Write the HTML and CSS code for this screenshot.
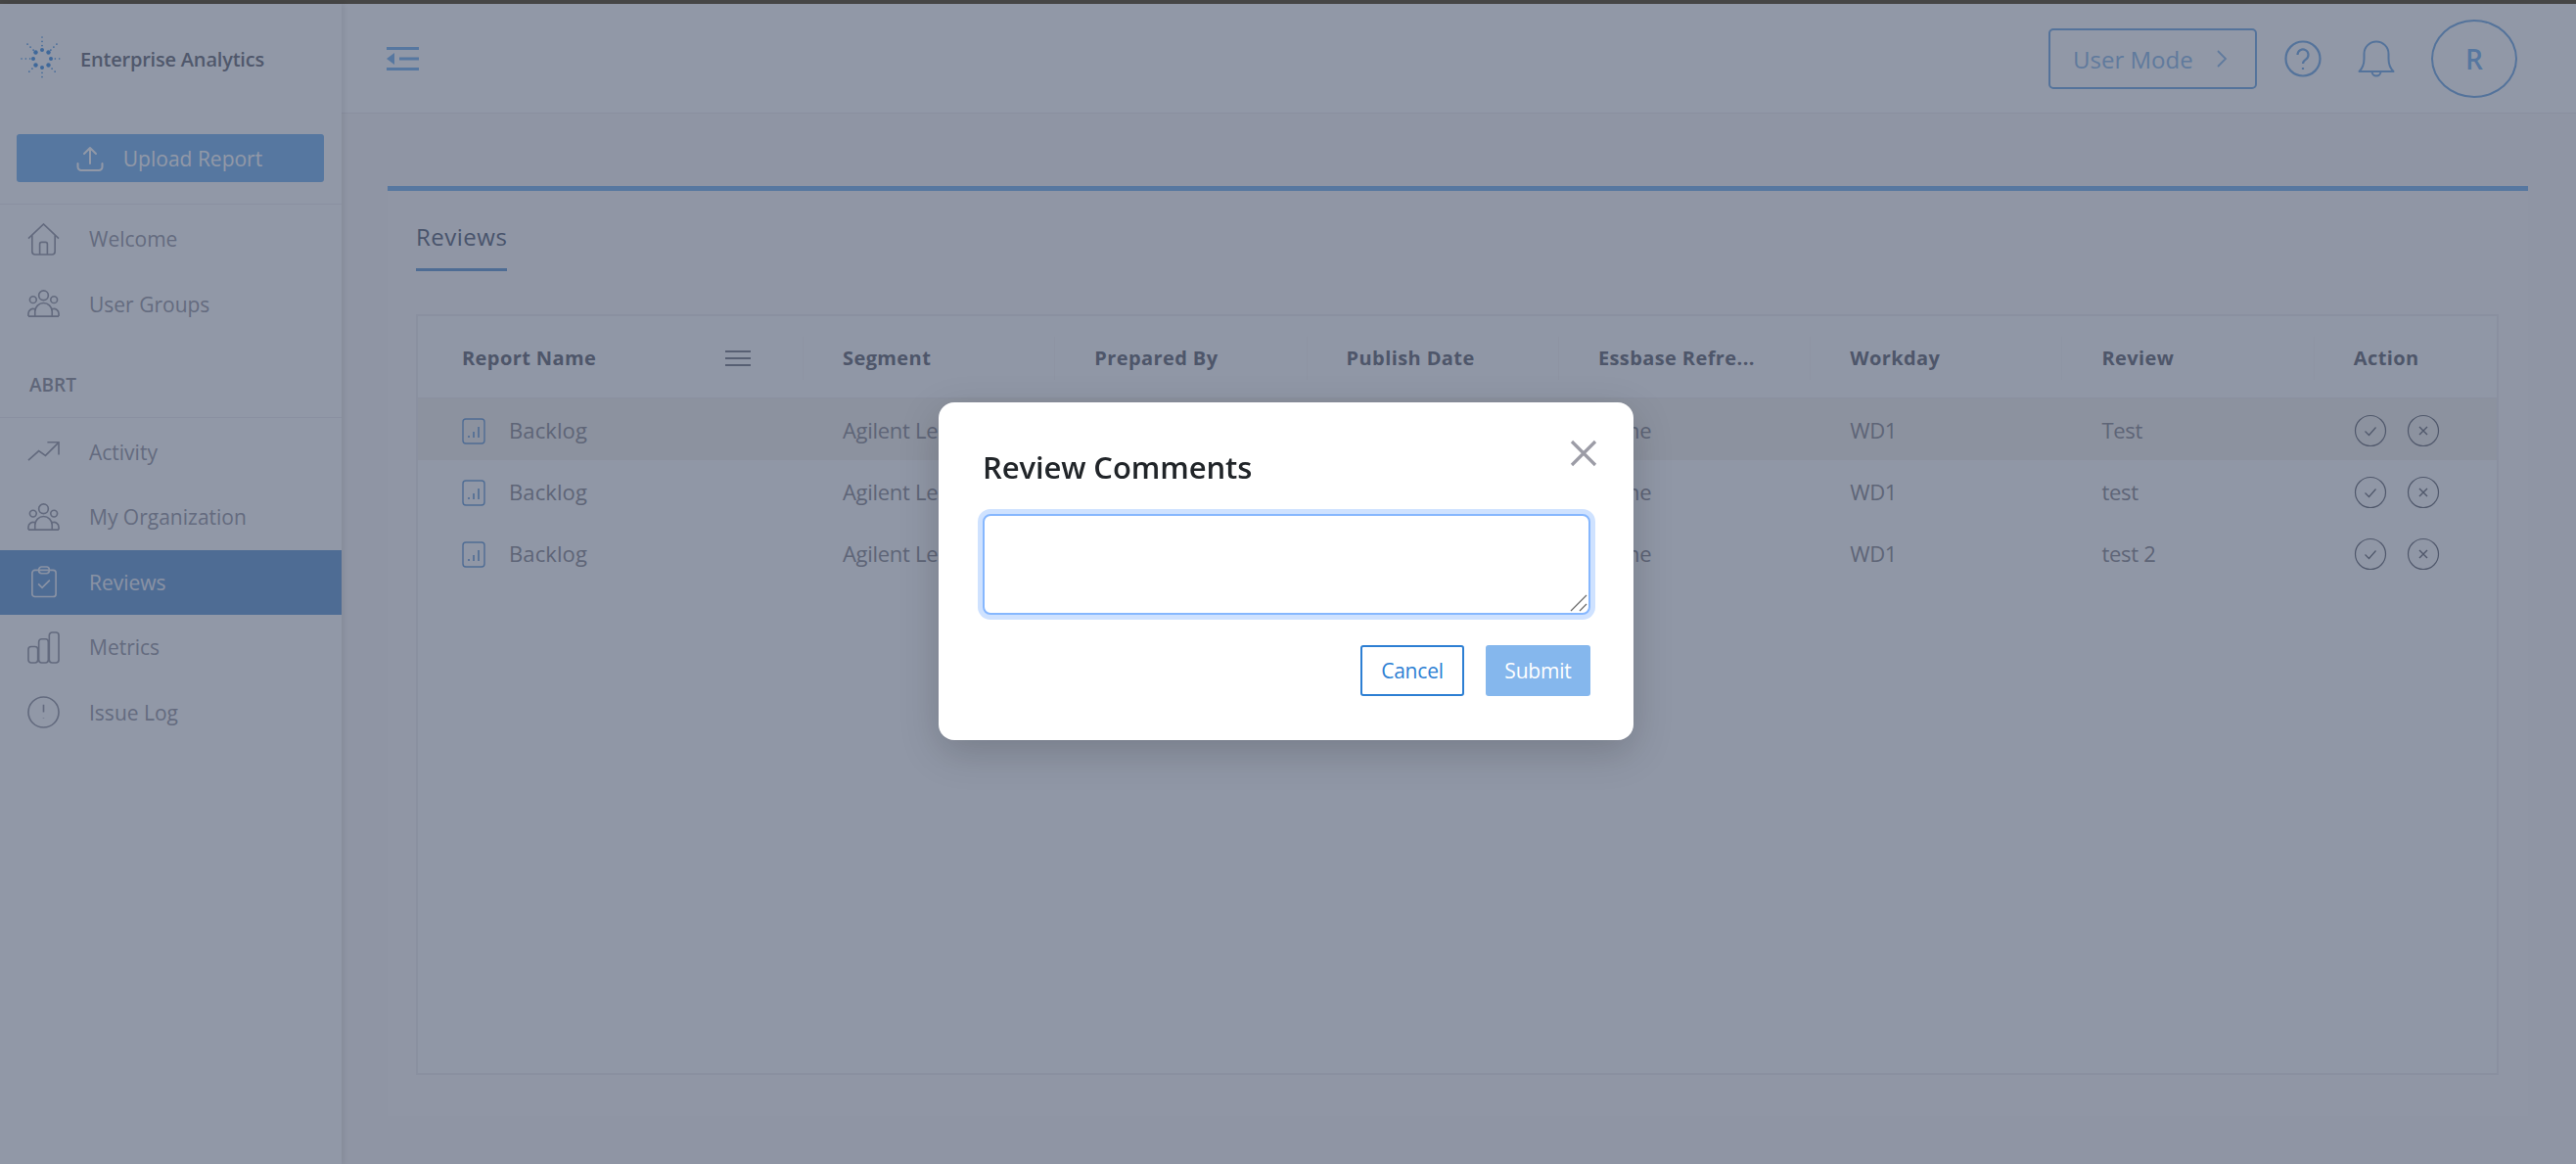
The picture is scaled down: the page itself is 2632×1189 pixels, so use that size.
FILE: index.html
```html
<!DOCTYPE html>
<html lang="en">
<head>
    <meta charset="UTF-8">
    <meta name="viewport" content="width=device-width, initial-scale=1.0">
    <title>Enterprise Analytics - Reviews</title>
    <link rel="stylesheet" href="styles.css">
</head>
<body>
    <svg class="defs" width="0" height="0">
        <symbol id="i-report" viewBox="0 0 24 27">
            <rect x="1" y="1" width="22" height="25" rx="3" fill="none" stroke="currentColor" stroke-width="1.4"/>
            <path d="M7 20v-2M12 20v-6M17 20V9" fill="none" stroke="currentColor" stroke-width="1.6"/>
        </symbol>
        <symbol id="i-check" viewBox="0 0 34 34">
            <circle cx="17" cy="17" r="15.5" fill="none" stroke="currentColor" stroke-width="1.2"/>
            <path d="M11.5 17.5l4 4 7-8" fill="none" stroke="currentColor" stroke-width="1.2"/>
        </symbol>
        <symbol id="i-cross" viewBox="0 0 34 34">
            <circle cx="17" cy="17" r="15.5" fill="none" stroke="currentColor" stroke-width="1.2"/>
            <path d="M13 13l8 8M21 13l-8 8" fill="none" stroke="currentColor" stroke-width="1.4"/>
        </symbol>
    </svg>

    <div class="topbar"></div>

    <div class="app">
        <!-- Sidebar -->
        <aside class="sidebar">
            <div class="brand">
                <svg class="logo" width="44" height="46" viewBox="0 0 44 46">
                    <g fill="none" stroke="#5a9fe4" stroke-linecap="round">
                        <g stroke-width="1.6" stroke-dasharray="0.1 4.2">
                            <path d="M22 1v12M22 33v12M1 23h12M31 23h12"/>
                            <path d="M7 8l8 8M29 30l8 8M37 8l-8 8M15 30l-8 8"/>
                        </g>
                    </g>
                    <g fill="#5a9fe4">
                        <circle cx="22" cy="14" r="2"/><circle cx="22" cy="32" r="2"/>
                        <circle cx="13" cy="23" r="2"/><circle cx="31" cy="23" r="2"/>
                        <circle cx="15.5" cy="16.5" r="2.2"/><circle cx="28.5" cy="16.5" r="2.2"/>
                        <circle cx="15.5" cy="29.5" r="2.2"/><circle cx="28.5" cy="29.5" r="2.2"/>
                    </g>
                </svg>
                <span class="brand-name">Enterprise Analytics</span>
            </div>

            <div class="upload-wrap">
                <button class="upload-btn" type="button">
                    <svg width="28" height="27" viewBox="0 0 28 27" fill="none" stroke="currentColor" stroke-width="2" stroke-linecap="round" stroke-linejoin="round">
                        <path d="M14 18V2M8 8l6-6 6 6M1.500 18v3.500a3.500 3.500 0 0 0 3.500 3.500h18a3.500 3.500 0 0 0 3.500-3.500V18"/>
                    </svg>
                    Upload Report
                </button>
            </div>

            <nav class="nav">
                <a class="nav-item">
                    <svg class="nav-icon" viewBox="0 0 34 34"><path d="M1 16L17 1l16 15M5 13v17a3 3 0 0 0 3 3h18a3 3 0 0 0 3-3V13M13 33V22a2 2 0 0 1 2-2h4a2 2 0 0 1 2 2v11"/></svg>
                    Welcome
                </a>
                <a class="nav-item">
                    <svg class="nav-icon" viewBox="0 0 34 30"><circle cx="17" cy="6" r="5"/><circle cx="6" cy="10.500" r="3.500"/><circle cx="28" cy="10.500" r="3.500"/><path d="M8 28v-5a9 9 0 0 1 18 0v5M1 28v-3a5 5 0 0 1 7-4.500M33 28v-3a5 5 0 0 0-7-4.500M1 28h32"/></svg>
                    User Groups
                </a>
            </nav>

            <div class="nav-title">ABRT</div>

            <nav class="nav nav-sub">
                <a class="nav-item">
                    <svg class="nav-icon" viewBox="0 0 34 24"><path d="M1 21l11-10 7 5L33 2M21 2h12v13"/></svg>
                    Activity
                </a>
                <a class="nav-item">
                    <svg class="nav-icon" viewBox="0 0 34 30"><circle cx="17" cy="6" r="5"/><circle cx="6" cy="11" r="3.500"/><circle cx="28" cy="11" r="3.500"/><path d="M8 28v-5a9 9 0 0 1 18 0v5M1 28v-3a5 5 0 0 1 7-4.500M33 28v-3a5 5 0 0 0-7-4.500M1 28h32"/></svg>
                    My Organization
                </a>
                <a class="nav-item active">
                    <svg class="nav-icon" viewBox="0 0 34 34"><rect x="5" y="4.500" width="25" height="28" rx="3"/><rect x="12" y="1" width="11" height="7" rx="3"/><path d="M11.500 19l4 4 8-8"/></svg>
                    Reviews
                </a>
                <a class="nav-item">
                    <svg class="nav-icon" viewBox="0 0 34 34"><rect x="1" y="16" width="10" height="17" rx="3"/><rect x="12" y="8" width="10" height="25" rx="3"/><rect x="23" y="1" width="10" height="32" rx="3"/></svg>
                    Metrics
                </a>
                <a class="nav-item">
                    <svg class="nav-icon" viewBox="0 0 34 34"><circle cx="17" cy="17" r="16"/><path d="M17 9v8M17 23v.500"/></svg>
                    Issue Log
                </a>
            </nav>
        </aside>

        <!-- Main -->
        <div class="main">
            <header class="header">
                <svg class="menu-toggle" width="34" height="28" viewBox="0 0 34 28">
                    <path d="M1 2h33v3H1zM14 12.500h20v3H14zM1 23h33v3H1z"/>
                    <path d="M9 8v12l-8-6z"/>
                </svg>
                <div class="header-right">
                    <button class="mode-btn" type="button">User Mode
                        <svg width="12" height="20" viewBox="0 0 12 20" fill="none" stroke="currentColor" stroke-width="1.800"><path d="M2 2l8 8-8 8"/></svg>
                    </button>
                    <svg class="help" width="38" height="38" viewBox="0 0 38 38" fill="none" stroke="currentColor" stroke-width="2.200">
                        <circle cx="19" cy="19" r="17.500"/>
                        <path d="M13.500 15a5.500 5.500 0 1 1 8.500 4.600c-2 1.300-3 2.400-3 4.400M19 28v2"/>
                    </svg>
                    <svg class="bell" width="38" height="42" viewBox="0 0 38 42" fill="none" stroke="currentColor" stroke-width="2" stroke-linejoin="round">
                        <path d="M1.500 34c3-3 5-6 5-13v-5a12.500 12.500 0 0 1 25 0v5c0 7 2 10 5 13zM14.500 34a4.500 4.500 0 0 0 9 0"/>
                    </svg>
                    <div class="avatar">R</div>
                </div>
            </header>

            <section class="content">
                <div class="card">
                    <div class="tabs"><span class="tab">Reviews</span></div>

                    <div class="grid">
                        <div class="row head">
                            <div class="cell first">Report Name
                                <svg class="col-menu" width="26" height="18" viewBox="0 0 26 18" fill="none" stroke="currentColor" stroke-width="2"><path d="M0 2h26M0 9h26M0 16h26"/></svg>
                            </div>
                            <div class="cell">Segment</div>
                            <div class="cell">Prepared By</div>
                            <div class="cell">Publish Date</div>
                            <div class="cell">Essbase Refre...</div>
                            <div class="cell">Workday</div>
                            <div class="cell">Review</div>
                            <div class="cell">Action</div>
                        </div>

                        <div class="row hover">
                            <div class="cell first"><svg class="doc" width="24" height="27"><use href="#i-report"/></svg>Backlog</div>
                            <div class="cell">Agilent Learning</div>
                            <div class="cell"></div>
                            <div class="cell"></div>
                            <div class="cell">None</div>
                            <div class="cell">WD1</div>
                            <div class="cell">Test</div>
                            <div class="cell actions"><svg width="34" height="34"><use href="#i-check"/></svg><svg width="34" height="34"><use href="#i-cross"/></svg></div>
                        </div>
                        <div class="row">
                            <div class="cell first"><svg class="doc" width="24" height="27"><use href="#i-report"/></svg>Backlog</div>
                            <div class="cell">Agilent Learning</div>
                            <div class="cell"></div>
                            <div class="cell"></div>
                            <div class="cell">None</div>
                            <div class="cell">WD1</div>
                            <div class="cell">test</div>
                            <div class="cell actions"><svg width="34" height="34"><use href="#i-check"/></svg><svg width="34" height="34"><use href="#i-cross"/></svg></div>
                        </div>
                        <div class="row">
                            <div class="cell first"><svg class="doc" width="24" height="27"><use href="#i-report"/></svg>Backlog</div>
                            <div class="cell">Agilent Learning</div>
                            <div class="cell"></div>
                            <div class="cell"></div>
                            <div class="cell">None</div>
                            <div class="cell">WD1</div>
                            <div class="cell">test 2</div>
                            <div class="cell actions"><svg width="34" height="34"><use href="#i-check"/></svg><svg width="34" height="34"><use href="#i-cross"/></svg></div>
                        </div>
                    </div>
                </div>
            </section>
        </div>
    </div>

    <!-- Review comments dialog -->
    <div class="backdrop">
        <div class="modal">
            <div class="modal-head">
                <h2>Review Comments</h2>
                <svg class="modal-close" width="28" height="28" viewBox="0 0 28 28" fill="none" stroke="currentColor" stroke-width="3.200"><path d="M2 2l24 24M26 2L2 26"/></svg>
            </div>
            <div class="comments-wrap">
                <textarea class="comments"></textarea>
                <svg class="grip" width="18" height="18" viewBox="0 0 18 18" fill="none" stroke="#6b6b6b" stroke-width="1.200"><path d="M1 17L17 1M10 17l7-7"/></svg>
            </div>
            <div class="modal-foot">
                <button class="btn-cancel" type="button">Cancel</button>
                <button class="btn-submit" type="button">Submit</button>
            </div>
        </div>
    </div>
</body>
</html>
```

FILE: styles.css
```css
* {
    box-sizing: border-box;
}

body {
    margin: 0;
    height: 1189px;
    overflow: hidden;
    font-family: "Open Sans", "Noto Sans", sans-serif;
    background-color: #fff;
    color: #333;
}

.defs {
    position: absolute;
}

.topbar {
    height: 4px;
    background-color: #464646;
}

.app {
    display: flex;
    height: 1185px;
}

/* Sidebar */
.sidebar {
    width: 349px;
    flex-shrink: 0;
    background-color: #fff;
    box-shadow: 3px 0 6px rgba(0, 0, 0, 0.08);
    position: relative;
}

.brand {
    display: flex;
    align-items: center;
    height: 112px;
    padding: 0 0 0 21px;
}

.brand-name {
    margin-left: 17px;
    font-size: 20px;
    font-weight: 600;
    letter-spacing: -0.2px;
    color: #7c7f88;
}

.upload-wrap {
    padding: 21px 18px 22px 17px;
    border-bottom: 1px solid #f0eff2;
}

.upload-btn {
    display: flex;
    align-items: center;
    justify-content: center;
    gap: 20px;
    width: 100%;
    height: 49px;
    padding: 0 2px 0 0;
    font-family: inherit;
    font-size: 21px;
    color: #fff;
    background-color: #88bcf0;
    border: none;
    border-radius: 3px;
}

.upload-btn svg {
    margin-top: 2px;
}

.nav {
    padding-top: 2px;
}

.nav-item {
    display: flex;
    align-items: center;
    height: 66.400px;
    padding-left: 28px;
    font-size: 21px;
    color: #a5a5ae;
}

.nav-icon {
    width: 33px;
    height: 33px;
    margin-right: 30px;
    fill: none;
    stroke: #a2a3ad;
    stroke-width: 1.700;
}

.nav-item.active {
    background-color: #79a6d8;
    color: #eef2f8;
}

.nav-item.active .nav-icon {
    stroke: #eef2f8;
}

.nav-title {
    display: flex;
    align-items: flex-end;
    height: 83px;
    padding: 0 0 20px 30px;
    font-size: 19px;
    font-weight: 600;
    color: #9a9aa3;
    border-bottom: 1px solid #f0eff2;
}

.nav-sub {
    padding-top: 2px;
}

/* Main */
.main {
    flex: 1;
    min-width: 0;
    background-color: #fbf9f8;
}

.header {
    display: flex;
    align-items: center;
    justify-content: space-between;
    height: 112px;
    padding: 1px 60px 0 45px;
    background-color: #fff;
    border-bottom: 1px solid #efedef;
}

.menu-toggle {
    fill: #88bcf0;
}

.header-right {
    display: flex;
    align-items: center;
}

.mode-btn {
    display: flex;
    align-items: center;
    gap: 23px;
    width: 213px;
    height: 62px;
    padding: 0 0 0 23px;
    font-family: inherit;
    font-size: 24px;
    color: #9cc3ea;
    background: none;
    border: 2px solid #84b4e6;
    border-radius: 5px;
}

.help {
    margin-left: 28px;
    color: #84b4e6;
}

.bell {
    margin-left: 37px;
    color: #84b4e6;
}

.avatar {
    display: flex;
    align-items: center;
    justify-content: center;
    width: 88px;
    height: 80px;
    margin-left: 37px;
    font-size: 28px;
    font-weight: 600;
    color: #88bcf0;
    border: 2px solid #84b4e6;
    border-radius: 50%;
}

.content {
    padding: 74px 49px 0 47px;
}

.card {
    height: 950px;
    padding: 0 30px 0 29px;
    border-top: 5px solid #88bcf0;
    background-color: #fcfafa;
}

.tabs {
    height: 126px;
    padding-top: 29px;
}

.tab {
    display: inline-block;
    padding-bottom: 14px;
    font-size: 24px;
    line-height: 36px;
    letter-spacing: 0.5px;
    color: #6e7688;
    border-bottom: 3px solid #79a6d8;
}

.grid {
    height: 777px;
    border: 2px solid #f1eff1;
    background-color: #fdfcfc;
}

.row {
    display: grid;
    grid-template-columns: 394px repeat(6, 257.300px) 1fr;
    align-items: center;
    height: 63px;
    font-size: 22px;
    letter-spacing: -0.3px;
    color: #99989f;
}

.row.head {
    height: 84px;
    padding-top: 2px;
    font-size: 20px;
    font-weight: 700;
    letter-spacing: 0.4px;
    color: #787a84;
    border-bottom: 1px solid #f1eff1;
}

.row.hover {
    background-color: #f5f2ee;
}

.cell {
    padding-left: 40px;
    white-space: nowrap;
}

.head .cell {
    height: 44px;
    line-height: 44px;
    border-right: 1px solid #f8f6f7;
}

.head .cell:last-child {
    border-right: none;
}

.cell.first {
    display: flex;
    align-items: center;
    padding-left: 45px;
}

.row:not(.head) .cell.first {
    letter-spacing: 0.1px;
}

.col-menu {
    margin-left: auto;
    margin-right: 53px;
    color: #8b8d96;
}

.doc {
    margin: 3px 24px 0 0;
    color: #79a6d8;
}

.actions {
    display: flex;
    gap: 20px;
    padding-top: 3px;
    color: #7c7f88;
}

/* Dialog */
.backdrop {
    position: fixed;
    top: 4px;
    left: 0;
    right: 0;
    bottom: 0;
    display: flex;
    justify-content: center;
    align-items: flex-start;
    padding: 407px 4px 0 0;
    background-color: rgba(35, 50, 80, 0.5);
}

.modal {
    width: 710px;
    height: 345px;
    padding: 38px 44px 0 45px;
    background-color: #fff;
    border-radius: 16px;
    box-shadow: 0 12px 40px rgba(0, 0, 0, 0.18);
}

.modal-head {
    display: flex;
    justify-content: space-between;
    align-items: flex-start;
    height: 76px;
}

.modal-head h2 {
    margin: 0;
    padding-top: 6px;
    font-size: 31px;
    line-height: 44px;
    font-weight: 600;
    letter-spacing: -0.1px;
    color: #212529;
}

.modal-close {
    margin-right: -7px;
    color: #9c9ca6;
}

.comments-wrap {
    position: relative;
}

.comments {
    display: block;
    width: 621px;
    height: 103px;
    border: 2px solid #86b7fe;
    border-radius: 8px;
    box-shadow: 0 0 0 5px #cfe2ff;
    outline: none;
    resize: none;
    background-color: #fff;
}

.grip {
    position: absolute;
    right: 3px;
    bottom: 3px;
}

.modal-foot {
    display: flex;
    justify-content: flex-end;
    gap: 22px;
    margin-top: 31px;
}

.modal-foot button {
    height: 52px;
    padding: 0;
    font-family: inherit;
    font-size: 21px;
    letter-spacing: -0.2px;
    border-radius: 3px;
}

.btn-cancel {
    width: 106px;
    color: #2d7fd3;
    background-color: #fff;
    border: 2px solid #2d7fd3;
}

.btn-submit {
    width: 107px;
    color: #fff;
    background-color: #85b7ed;
    border: none;
}
```
